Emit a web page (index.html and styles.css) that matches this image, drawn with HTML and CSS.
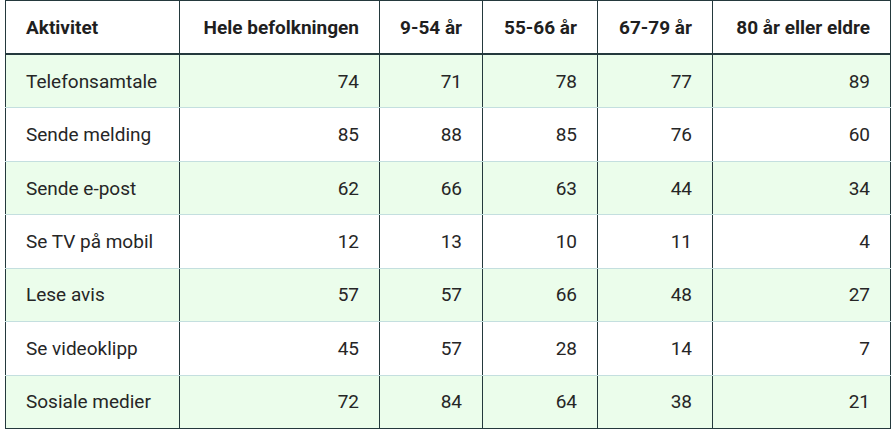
FILE: index.html
```html
<!DOCTYPE html>
<html lang="no">
<head>
<meta charset="utf-8">
<title>Aktiviteter</title>
<link rel="stylesheet" href="styles.css">
</head>
<body>
<table class="data">
  <colgroup>
    <col class="c1"><col class="c2"><col class="c3"><col class="c4"><col class="c5"><col class="c6">
  </colgroup>
  <thead>
    <tr>
      <th class="left">Aktivitet</th>
      <th>Hele befolkningen</th>
      <th>9-54 år</th>
      <th>55-66 år</th>
      <th>67-79 år</th>
      <th>80 år eller eldre</th>
    </tr>
  </thead>
  <tbody>
    <tr class="alt"><td class="left">Telefonsamtale</td><td>74</td><td>71</td><td>78</td><td>77</td><td>89</td></tr>
    <tr><td class="left">Sende melding</td><td>85</td><td>88</td><td>85</td><td>76</td><td>60</td></tr>
    <tr class="alt"><td class="left">Sende e-post</td><td>62</td><td>66</td><td>63</td><td>44</td><td>34</td></tr>
    <tr><td class="left">Se TV på mobil</td><td>12</td><td>13</td><td>10</td><td>11</td><td>4</td></tr>
    <tr class="alt"><td class="left">Lese avis</td><td>57</td><td>57</td><td>66</td><td>48</td><td>27</td></tr>
    <tr><td class="left">Se videoklipp</td><td>45</td><td>57</td><td>28</td><td>14</td><td>7</td></tr>
    <tr class="alt"><td class="left">Sosiale medier</td><td>72</td><td>84</td><td>64</td><td>38</td><td>21</td></tr>
  </tbody>
</table>
</body>
</html>
```
FILE: styles.css
```css
html, body {
  margin: 0;
  padding: 0;
  background: #ffffff;
}
body {
  padding: 0 0 0 5px;
  font-family: Roboto, "Noto Sans", sans-serif;
  color: #222222;
}
.data {
  border-collapse: collapse;
  width: 885px;
  table-layout: fixed;
  border: 1px solid #24393d;
}
.c1 { width: 174px; }
.c2 { width: 200px; }
.c3 { width: 103px; }
.c4 { width: 115px; }
.c5 { width: 115px; }
.c6 { width: 178px; }
.data th, .data td {
  border-left: 1px solid #24393d;
  border-right: 1px solid #24393d;
  padding: 0 20px;
  text-align: right;
  white-space: nowrap;
}
.data th {
  height: 52px;
  font-size: 19px;
  font-weight: 700;
  color: #1f1f1f;
  border-bottom: 2px solid #24393d;
}
.data td {
  height: 52.45px;
  font-size: 19px;
  font-weight: 400;
  color: #262626;
  border-bottom: 1px solid #c4dfdf;
}
.data tbody tr:last-child td {
  border-bottom: 1px solid #24393d;
}
.data .left {
  text-align: left;
}
.data tr.alt td {
  background: #ebfdeb;
}
```
